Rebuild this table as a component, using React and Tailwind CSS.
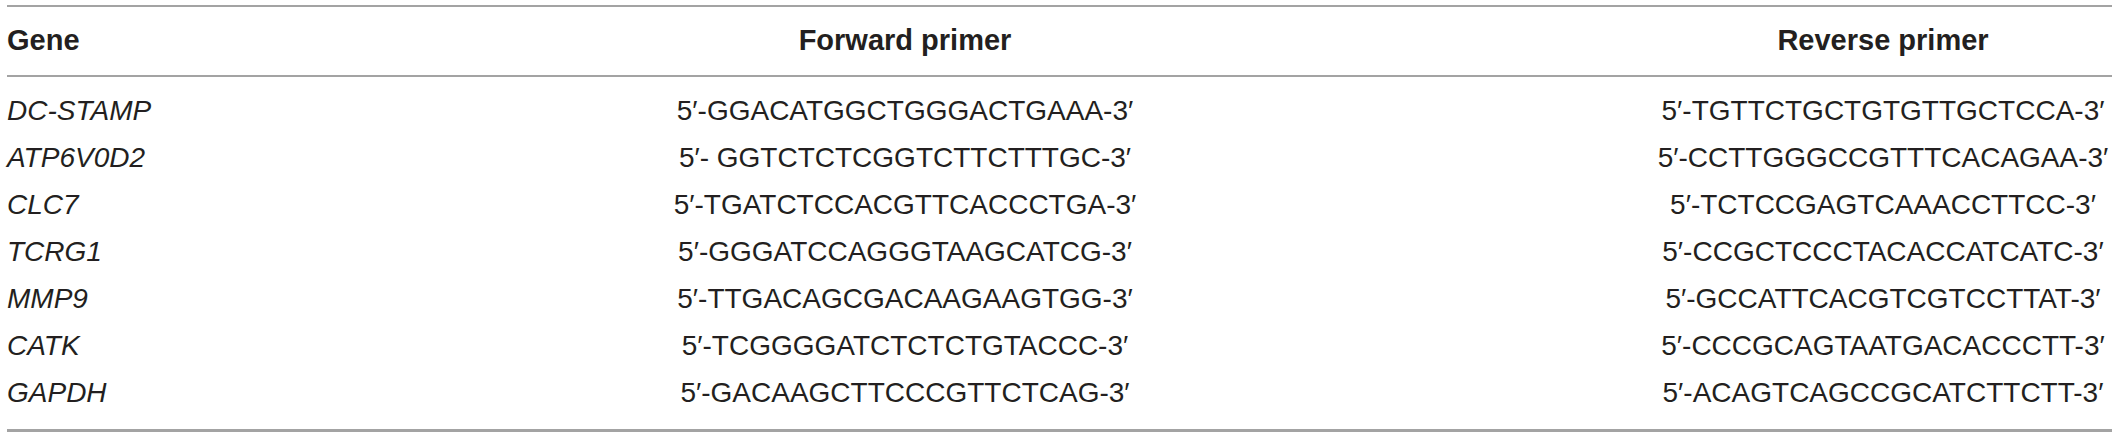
const rows = [
  { gene: 'DC-STAMP', fwd: '5′-GGACATGGCTGGGACTGAAA-3′', rev: '5′-TGTTCTGCTGTGTTGCTCCA-3′' },
  { gene: 'ATP6V0D2', fwd: '5′- GGTCTCTCGGTCTTCTTTGC-3′', rev: '5′-CCTTGGGCCGTTTCACAGAA-3′' },
  { gene: 'CLC7', fwd: '5′-TGATCTCCACGTTCACCCTGA-3′', rev: '5′-TCTCCGAGTCAAACCTTCC-3′' },
  { gene: 'TCRG1', fwd: '5′-GGGATCCAGGGTAAGCATCG-3′', rev: '5′-CCGCTCCCTACACCATCATC-3′' },
  { gene: 'MMP9', fwd: '5′-TTGACAGCGACAAGAAGTGG-3′', rev: '5′-GCCATTCACGTCGTCCTTAT-3′' },
  { gene: 'CATK', fwd: '5′-TCGGGGATCTCTCTGTACCC-3′', rev: '5′-CCCGCAGTAATGACACCCTT-3′' },
  { gene: 'GAPDH', fwd: '5′-GACAAGCTTCCCGTTCTCAG-3′', rev: '5′-ACAGTCAGCCGCATCTTCTT-3′' },
]

export default function App() {
  return (
    <div className="w-[2120px] h-[438px] bg-white pt-[5px] pl-[7px] pr-[8px] font-['Liberation_Sans',Arial,sans-serif] text-[#231f20]">
      <div className="border-t-2 border-b-[3px] border-[#a3a3a3]">
        {/* header */}
        <div className="grid grid-cols-[149px_1498px_1fr] h-[70px] items-center border-b-2 border-[#a3a3a3] text-[29px] font-bold whitespace-nowrap">
          <div>Gene</div>
          <div className="text-center">Forward primer</div>
          <div className="text-center">Reverse primer</div>
        </div>

        {/* body */}
        <div className="pt-[10px] pb-[13px]">
          {rows.map(r => (
            <div key={r.gene} className="grid grid-cols-[149px_1498px_1fr] h-[47px] items-center text-[28px] whitespace-nowrap">
              <div className="italic">{r.gene}</div>
              <div className="text-center">{r.fwd}</div>
              <div className="text-center">{r.rev}</div>
            </div>
          ))}
        </div>
      </div>
    </div>
  )
}
